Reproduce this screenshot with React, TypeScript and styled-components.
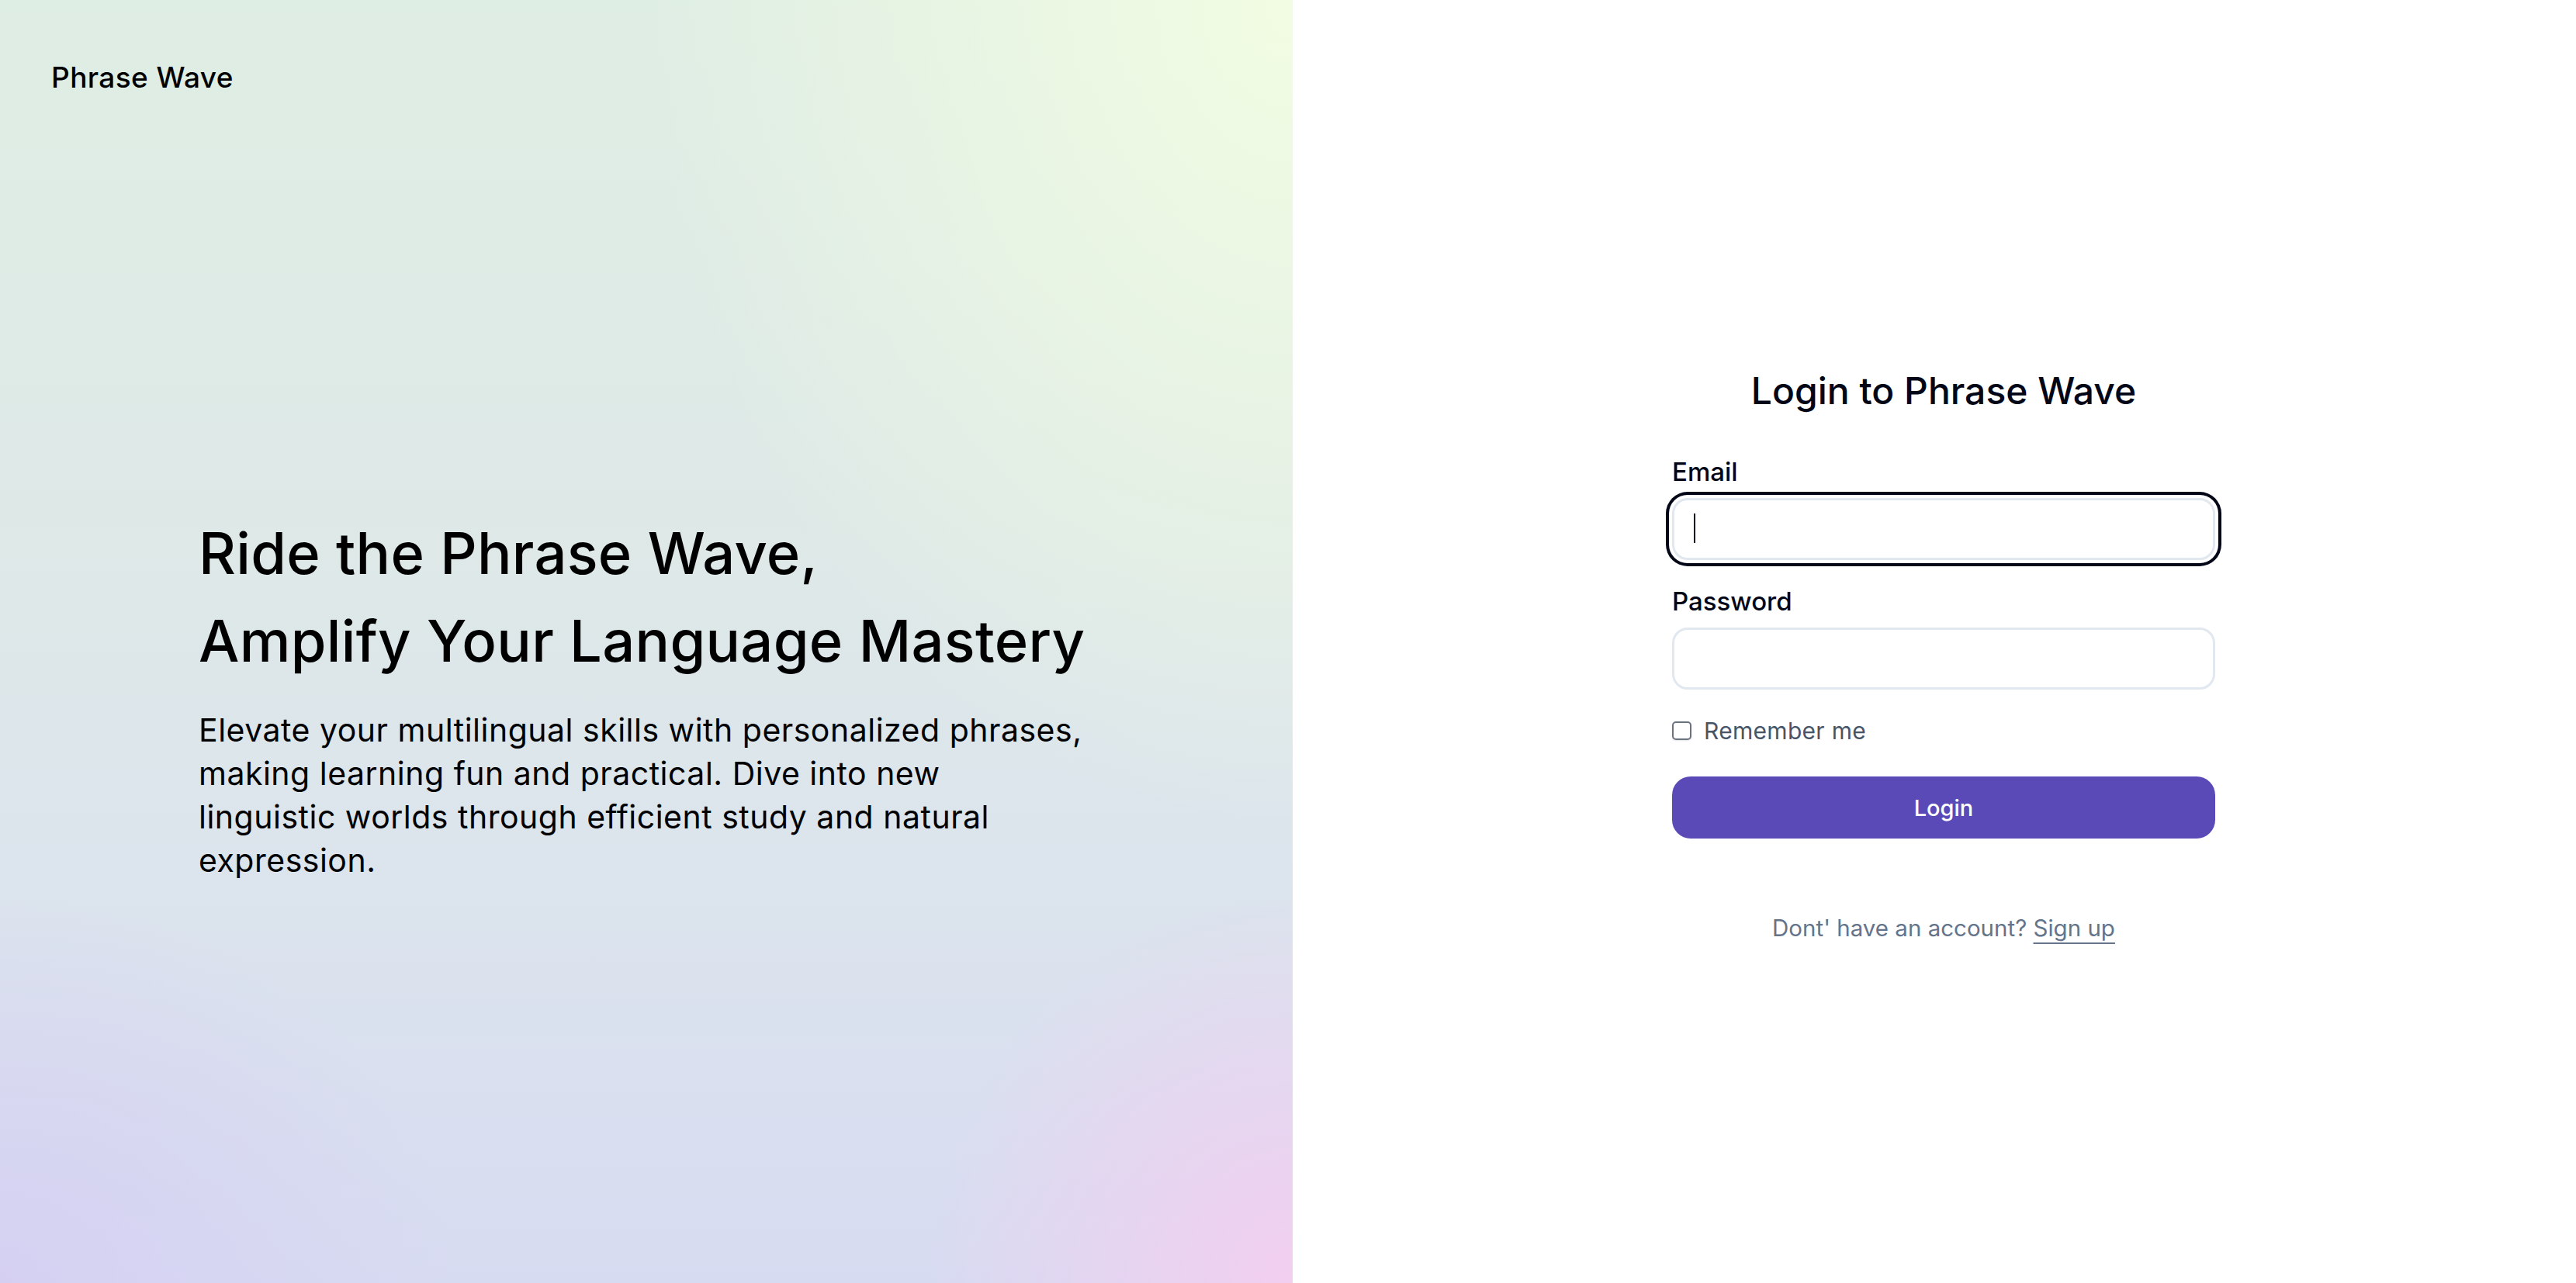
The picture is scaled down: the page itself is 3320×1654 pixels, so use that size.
import React from 'react';
import styled, { createGlobalStyle } from 'styled-components';

const GlobalStyle = createGlobalStyle`
  html, body {
    margin: 0;
    padding: 0;
    height: 100%;
  }
  body {
    font-family: Inter, "Noto Sans", sans-serif;
    color: #020617;
    background: #ffffff;
  }
  * {
    box-sizing: border-box;
  }
`;

const Page = styled.div`
  display: flex;
  width: 100%;
  height: 100vh;
  overflow: hidden;
`;

const Showcase = styled.section`
  flex: 0 0 1666px;
  display: flex;
  flex-direction: column;
  background:
    radial-gradient(ellipse 50% 65% at 100% 0%, rgba(242, 253, 226, 0.95), rgba(242, 253, 226, 0) 100%),
    radial-gradient(ellipse 28% 30% at 100% 100%, rgba(242, 206, 240, 1), rgba(242, 206, 240, 0) 100%),
    radial-gradient(ellipse 35% 30% at 0% 100%, rgba(212, 206, 242, 0.85), rgba(212, 206, 242, 0) 100%),
    linear-gradient(180deg, #dfeee4 0%, #dee9e7 40%, #dce5ec 65%, #d7dbf1 100%);
`;

const Brand = styled.header`
  padding: 73px 66px 0;
  font-size: 37px;
  letter-spacing: 0.4px;
  line-height: 54px;
  font-weight: 500;
  color: #000;
`;

const Hero = styled.div`
  flex: 1;
  display: flex;
  flex-direction: column;
  justify-content: center;
  padding: 12px 0 0 256px;
`;

const Headline = styled.h1`
  margin: 0;
  font-size: 74px;
  letter-spacing: 0.3px;
  line-height: 113px;
  font-weight: 500;
  color: #000;
`;

const Lead = styled.p`
  margin: 30px 0 0;
  max-width: 1140px;
  font-size: 41px;
  letter-spacing: 0.5px;
  line-height: 56px;
  font-weight: 400;
  color: #000;
`;

const FormSide = styled.section`
  flex: 1;
  display: flex;
  align-items: center;
  justify-content: center;
  padding: 34px 0 0 24px;
`;

const FormColumn = styled.form`
  width: 700px;
  display: flex;
  flex-direction: column;
`;

const Title = styled.h2`
  margin: 0 0 44px;
  text-align: center;
  font-size: 48px;
  line-height: 72px;
  font-weight: 500;
  color: #020617;
`;

const Field = styled.div<{ $gap?: number }>`
  display: flex;
  flex-direction: column;
  gap: 10px;
  margin-bottom: ${(p) => p.$gap ?? 29}px;
`;

const Label = styled.label`
  font-size: 33px;
  line-height: 48px;
  font-weight: 500;
  color: #020617;
`;

const InputWrap = styled.div`
  position: relative;
`;

const TextInput = styled.input<{ $focused?: boolean }>`
  display: block;
  width: 100%;
  height: 80px;
  padding: 0 26px;
  border: 3px solid #e2e8f0;
  border-radius: 20px;
  background: #fff;
  font-family: inherit;
  font-size: 32px;
  color: #020617;
  outline: none;
  box-shadow: ${(p) => (p.$focused ? '0 0 0 4px #ffffff, 0 0 0 8px #020617' : 'none')};
`;

const Caret = styled.span`
  position: absolute;
  left: 28px;
  top: 20px;
  width: 2px;
  height: 38px;
  background: #020617;
`;

const CheckRow = styled.label`
  display: flex;
  align-items: center;
  gap: 16px;
  height: 48px;
  margin-bottom: 35px;
  font-size: 30px;
  letter-spacing: 0.3px;
  font-weight: 400;
  color: #475569;
`;

const Box = styled.span`
  width: 25px;
  height: 24px;
  border: 2.5px solid #6b7280;
  border-radius: 5px;
  background: #fff;
  box-shadow: 0 1px 2px rgba(0, 0, 0, 0.12);
`;

const SubmitButton = styled.button`
  height: 80px;
  width: 100%;
  border: none;
  border-radius: 24px;
  background: #5a4ab8;
  color: #fff;
  font-family: inherit;
  font-size: 29px;
  font-weight: 500;
  cursor: pointer;
`;

const Footer = styled.p`
  margin: 91px 0 0;
  text-align: center;
  font-size: 29.5px;
  line-height: 48px;
  color: #64748b;
`;

const SignUp = styled.a`
  color: #64748b;
  text-decoration: underline;
  text-decoration-thickness: 2px;
  text-underline-offset: 8px;
`;

export default function App() {
  return (
    <>
      <GlobalStyle />
      <Page>
        <Showcase>
          <Brand>Phrase Wave</Brand>
          <Hero>
            <Headline>
              Ride the Phrase Wave,
              <br />
              Amplify Your Language Mastery
            </Headline>
            <Lead>
              Elevate your multilingual skills with personalized phrases, making learning fun and
              practical. Dive into new linguistic worlds through efficient study and natural
              expression.
            </Lead>
          </Hero>
        </Showcase>
        <FormSide>
          <FormColumn onSubmit={(e) => e.preventDefault()}>
            <Title>Login to Phrase Wave</Title>
            <Field>
              <Label htmlFor="email">Email</Label>
              <InputWrap>
                <TextInput id="email" type="email" $focused />
                <Caret />
              </InputWrap>
            </Field>
            <Field>
              <Label htmlFor="password">Password</Label>
              <TextInput id="password" type="password" />
            </Field>
            <CheckRow>
              <Box />
              Remember me
            </CheckRow>
            <SubmitButton type="submit">Login</SubmitButton>
            <Footer>
              Dont' have an account? <SignUp href="#">Sign up</SignUp>
            </Footer>
          </FormColumn>
        </FormSide>
      </Page>
    </>
  );
}
